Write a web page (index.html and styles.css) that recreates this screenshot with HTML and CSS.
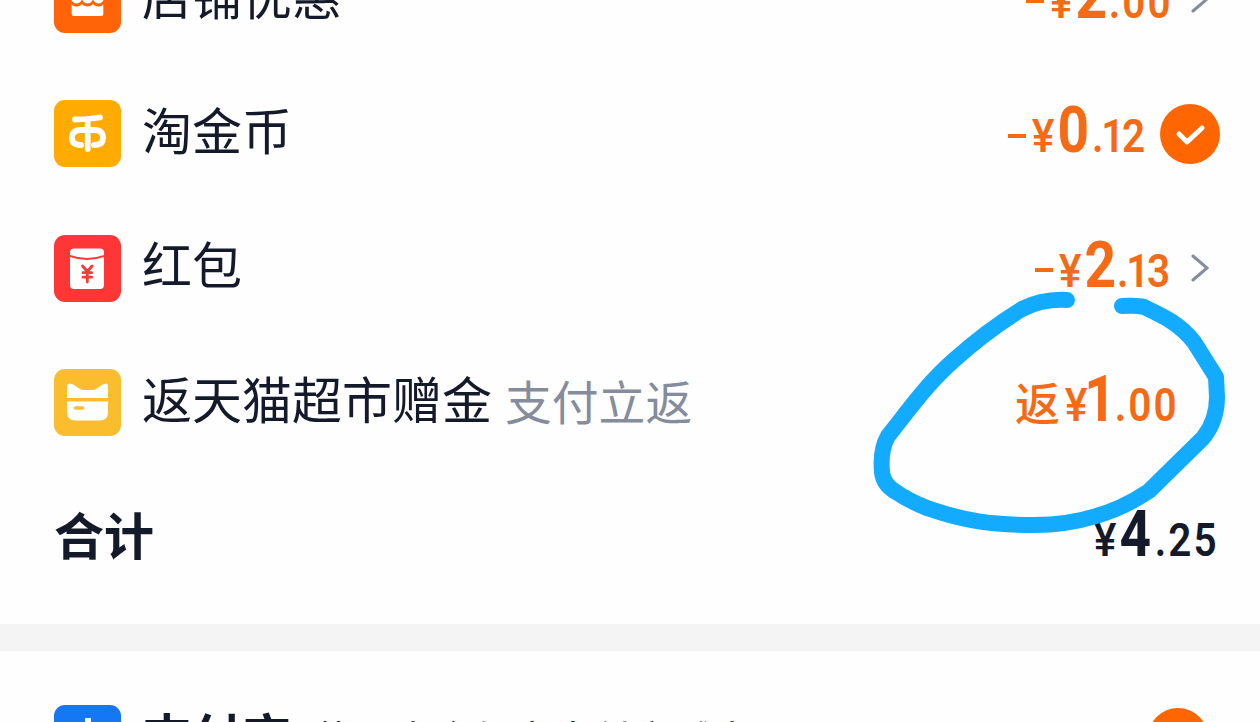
FILE: index.html
```html
<!DOCTYPE html>
<html lang="zh-CN">
<head>
    <meta charset="UTF-8">
    <meta name="viewport" content="width=device-width, initial-scale=1.0">
    <title>确认订单</title>
    <link rel="stylesheet" href="styles.css">
</head>
<body>
    <div class="card discounts">
        <div class="row">
            <svg class="icon shop" viewBox="0 0 67 67">
                <path d="M17.700 24h31.600v24q0 2-2 2H19.700q-2 0-2-2z"/>
                <path class="mark" d="M17 36q2 3 5.500 3t5.500-3q2 3 5.500 3t5.500-3q2 3 5.500 3t5.500-3"/>
            </svg>
            <span class="label">店铺优惠</span>
            <span class="price"><i class="minus"></i><span class="yen">¥</span><b>2</b><span class="cents">.00</span></span>
            <svg class="arrow" viewBox="0 0 18 28"><path d="M2 2l14 12L2 26"/></svg>
        </div>
        <div class="row">
            <svg class="icon coin" viewBox="0 0 67 67">
                <path class="line" d="M21 19.500q12 0 25-2M33.700 19v30M27 45q-9 0-9-7 0-8 9-8h13q9 0 9 8 0 7-9 7"/>
            </svg>
            <span class="label">淘金币</span>
            <span class="price"><i class="minus"></i><span class="yen">¥</span><b>0</b><span class="cents narrow wide">.12</span></span>
            <svg class="check" viewBox="0 0 60 60"><circle cx="30" cy="30" r="30"/><path d="M19 30l8 8 15-14"/></svg>
        </div>
        <div class="row">
            <svg class="icon packet" viewBox="0 0 67 67">
                <path d="M16 20v-2.500q0-4 4-4h26q4 0 4 4v2.500q-17 6-34 0z"/>
                <path d="M16 22q17 6 34 0v28q0 4-4 4H20q-4 0-4-4z"/>
                <path class="mark" d="M28.500 31l4.800 5.500 4.800-5.500M33.300 36v11M29 37.700h8.600M29 42.200h8.600"/>
            </svg>
            <span class="label">红包</span>
            <span class="price"><i class="minus"></i><span class="yen">¥</span><b>2</b><span class="cents narrow">.13</span></span>
            <svg class="arrow" viewBox="0 0 18 28"><path d="M2 2l14 12L2 26"/></svg>
        </div>
        <div class="row">
            <svg class="icon cat" viewBox="0 0 67 67">
                <path d="M13 29V18q0-3.500 3-3.500 2 0 4 1.500l6 4q2 1 4 1h8q2 0 4-1l6-4q2-1.500 4-1.500 2 0 2 3.500v11z"/>
                <path d="M13 32.500h41V43q0 8.500-8 8.500H21q-8 0-8-8.500z"/>
                <path class="mark" d="M21.500 39h7"/>
            </svg>
            <span class="label">返天猫超市赠金</span>
            <span class="note">支付立返</span>
            <span class="price back"><span class="prefix">返</span><span class="yen">¥</span><b>1</b><span class="cents wide">.00</span></span>
        </div>
        <div class="row">
            <span class="label total">合计</span>
            <span class="price sum"><span class="yen">¥</span><b>4</b><span class="cents wide">.25</span></span>
        </div>
    </div>

    <div class="card payment">
        <div class="row">
            <svg class="icon alipay" viewBox="0 0 67 67">
                <path d="M31 13h6v8h14v4H37v6h11q-2 7-5 11l12 5v5l-15-6q-6 7-14 7-11 0-11-8t11-7q5 0 13 3 2-3 3-6H20v-4h11v-6H17v-4h14z"/>
            </svg>
            <span class="label strong">支付宝</span>
            <span class="pay-note">使用本余额宝支付立减享</span>
            <svg class="check" viewBox="0 0 60 60"><circle cx="30" cy="30" r="30"/><path d="M19 30l8 8 15-14"/></svg>
        </div>
    </div>

    <svg class="scribble" viewBox="0 0 1260 722">
        <path d="M1067 300C1050 299 1034 303 1022 309C996 325 974 342 953 361C928 383 911 407 888 436C881 448 881 461 882 472C883 482 889 488 896 492C906 499 917 504 927 508C964 521 992 525 1034 525C1078 525 1118 512 1149 491L1203 438C1212 427 1217 412 1217 397L1216 377L1194 342C1180 324 1165 317 1144 307C1137 305 1131 306 1122 306"/>
    </svg>
</body>
</html>
```
FILE: styles.css
```css
body {
    margin: 0;
    height: 722px;
    overflow: hidden;
    background: #f4f4f4;
    color: #151a2b;
    font-family: Roboto, 'Noto Sans CJK SC', sans-serif;
}
.card {
    background: #fefefe;
    padding: 0 40px 0 54px;
}
.discounts {
    height: 692px;
    margin-top: -68px;
}
.row {
    display: flex;
    align-items: center;
    height: 134.5px;
}
.payment {
    margin-top: 27px;
    padding-top: 20px;
    height: 51px;
    overflow: hidden;
}
.icon {
    width: 67px;
    height: 67px;
    flex: none;
    margin-right: 21px;
    border-radius: 11px;
    fill: #fff;
}
.shop { background: #ff6508; }
.coin { background: #ffab02; }
.packet { background: #ff3636; }
.cat { background: #f9bd2e; }
.alipay { background: #1677f5; }
.icon .line {
    fill: none;
    stroke: #fff;
    stroke-width: 5.8;
    stroke-linecap: round;
}
.icon .mark {
    fill: none;
    stroke: #f23b3b;
    stroke-width: 2.8;
    stroke-linecap: round;
}
.shop .mark { stroke: #ff6508; }
.cat .mark {
    stroke: #f9bd2e;
    stroke-width: 3.5;
}
.label {
    margin-top: -2px;
    font-size: 50px;
    line-height: 72px;
    white-space: nowrap;
}
.strong {
    margin-top: 2px;
    font-weight: bold;
}
.total {
    margin-top: 1px;
    font-weight: bold;
    font-size: 50px;
}
.note {
    margin: -7px 0 0 13px;
    font-size: 46.8px;
    color: #858c9c;
}
.pay-note {
    margin: 0 0 0 21px;
    font-size: 40px;
    white-space: nowrap;
}
.price {
    display: flex;
    align-items: baseline;
    margin-left: auto;
    color: #f56a15;
    font-size: 46px;
    font-weight: 500;
    line-height: 72px;
}
.price b {
    font-size: 64px;
    font-weight: 700;
    width: 34px;
    text-align: center;
    transform: scaleX(0.86);
}
/* squeezed digits, like the DIN numerals of the app */
.cents {
    font-weight: 600;
    letter-spacing: 2.3px;
    margin: 0 -2px 0 -7px;
    transform: scaleX(0.88);
    transform-origin: right;
}
.narrow {
    letter-spacing: -2.6px;
    margin: 0 3px 0 -6px;
}
.wide { margin-left: -5px; }
.narrow.wide { margin-left: -4px; }
.yen {
    transform: scaleX(0.93);
}
.prefix {
    font-size: 45px;
    margin-right: 4px;
}
.minus {
    width: 18px;
    height: 4px;
    margin: 4px 5px 0 0;
    align-self: center;
    background: #f56a15;
}
.back { margin-right: 43px; }
.back b {
    display: flex;
    justify-content: center;
    width: 22px;
    margin-left: 1px;
}
.sum {
    margin-right: 3px;
    color: #151a2b;
}
.arrow {
    width: 18px;
    height: 28px;
    margin: 0 11px 0 20px;
    fill: none;
    stroke: #858c9c;
    stroke-width: 3;
    stroke-linecap: round;
}
.check {
    width: 60px;
    height: 60px;
    flex: none;
    margin-left: 14px;
    fill: #ff6500;
}
.payment .check {
    margin: 0 12px 0 auto;
}
.check path {
    fill: none;
    stroke: #fff;
    stroke-width: 5;
    stroke-linecap: round;
    stroke-linejoin: round;
}
.scribble {
    position: absolute;
    top: 0;
    left: 0;
    width: 1260px;
    height: 722px;
    fill: none;
    stroke: #13abff;
    stroke-width: 16;
    stroke-linecap: round;
    stroke-linejoin: round;
}
```
